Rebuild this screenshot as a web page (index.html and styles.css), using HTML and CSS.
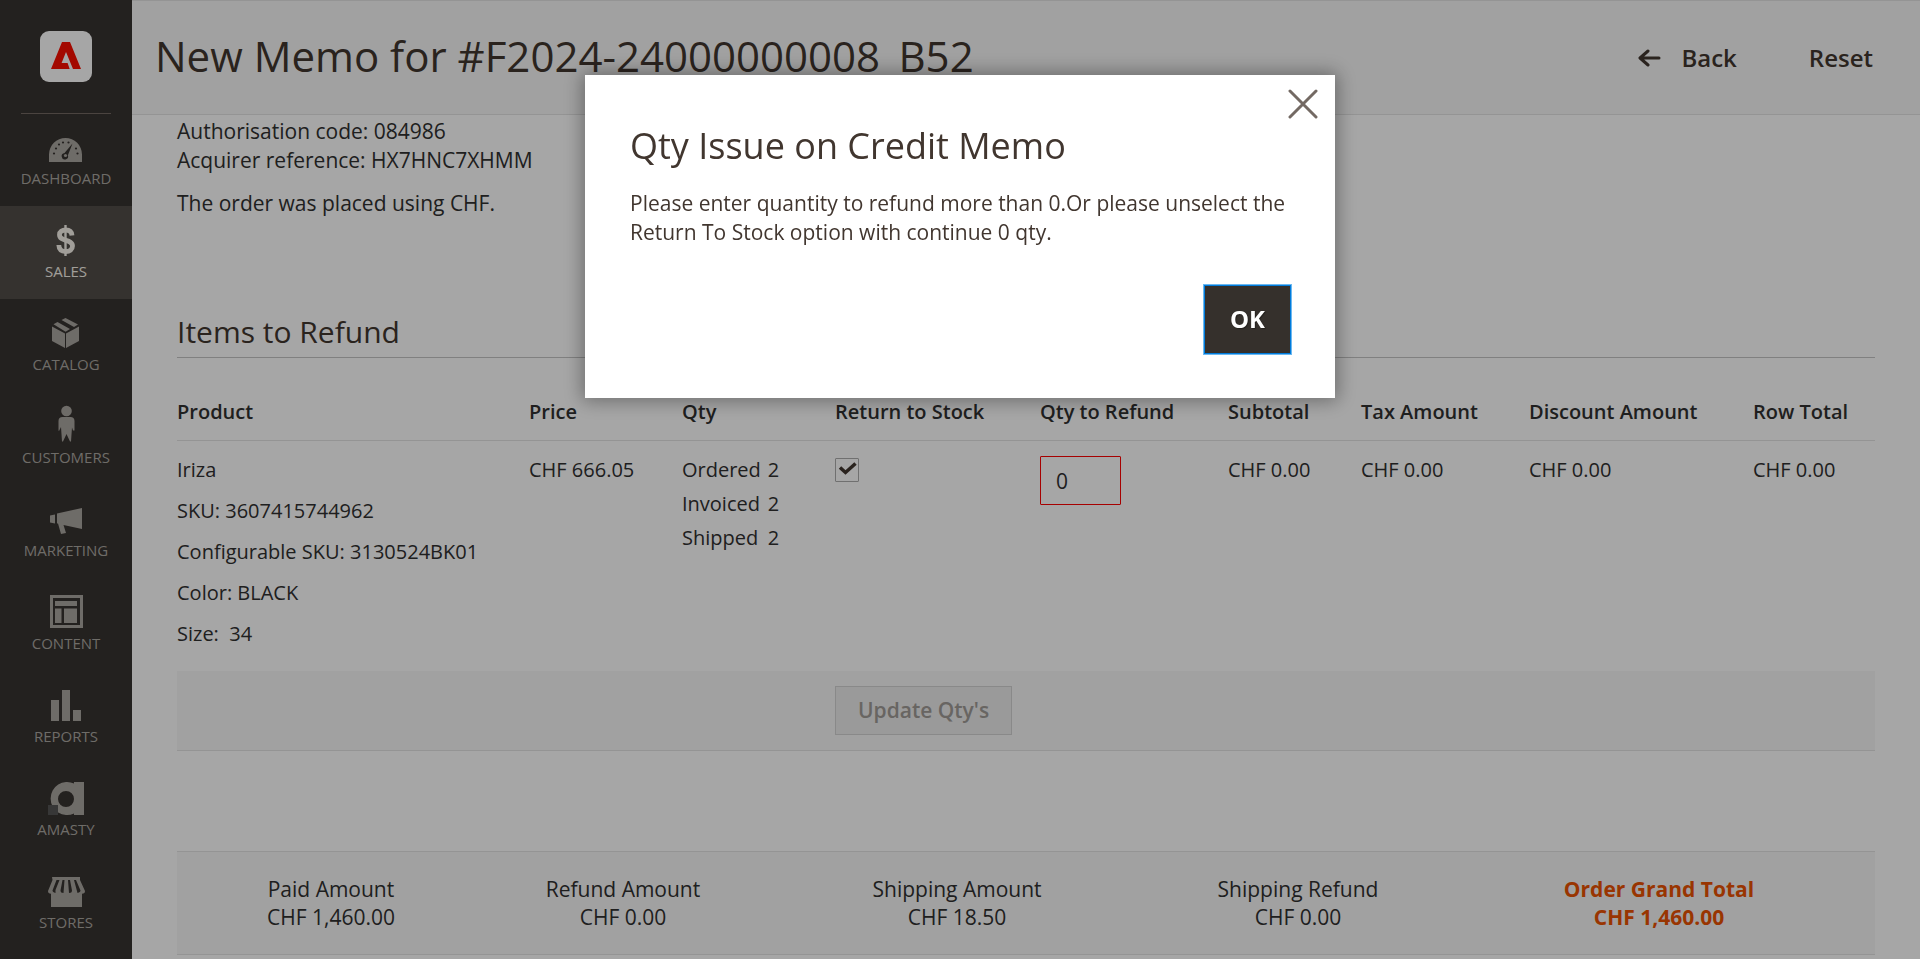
FILE: index.html
```html
<!DOCTYPE html>
<html lang="en">
<head>
<meta charset="utf-8">
<title>New Memo for #F2024-24000000008_B52</title>
<link rel="stylesheet" href="styles.css">
</head>
<body>
<div class="app">
  <aside class="sidebar">
    <a class="logo" href="#" aria-label="Admin home">
      <svg width="52" height="52" viewBox="0 0 52 52"><rect width="52" height="51" rx="9" fill="#fff"/><path d="M22 11h8l11 27h-8l-7-17-4.400 11h6l2.100 6H11z" fill="#fa0f00"/></svg>
    </a>
    <nav class="menu">
      <a class="menu-item" href="#">
        <svg class="menu-icon" viewBox="0 0 44 44"><path fill="currentColor" fill-rule="evenodd" d="M5 37V29.500a16.500 16.500 0 0 1 33 0V37zM28.500 18.500l-8 9.600a3.200 3.200 0 1 0 3.400 2.200z"/><circle cx="21.500" cy="30.500" r="1.600" fill="currentColor"/><g class="menu-hole"><circle cx="10" cy="28.500" r="1.100"/><circle cx="12" cy="23.500" r="1.100"/><circle cx="15" cy="19.500" r="1.100"/><circle cx="19" cy="17.500" r="1.100"/><circle cx="24.500" cy="17.500" r="1.100"/><circle cx="32" cy="23.500" r="1.100"/><circle cx="33.500" cy="28.500" r="1.100"/></g></svg>
        <span>Dashboard</span>
      </a>
      <a class="menu-item menu-item-active" href="#">
        <svg class="menu-icon" viewBox="0 0 44 44" fill="none" stroke="currentColor"><path stroke-width="4.800" d="M28 17.500c-.3-4-2.500-5.500-6.200-5.500-3.800 0-6.300 1.700-6.300 4.700 0 7.500 13 3.800 13 11.300 0 3.600-2.700 5.500-6.700 5.500-4.200 0-6.800-2-7-6.500"/><path stroke-width="2.400" d="M21.500 7v31"/></svg>
        <span>Sales</span>
      </a>
      <a class="menu-item" href="#">
        <svg class="menu-icon" viewBox="0 0 44 44" fill="currentColor"><path d="M8 15.500l13 7V37L8 30zM35 15.500l-13 7V37l13-7zM17.500 9L21.500 7 34 13.500l-4 2.400zM9.500 13.300l4-2.200 12.500 7-4.400 2.600z"/></svg>
        <span>Catalog</span>
      </a>
      <a class="menu-item" href="#">
        <svg class="menu-icon" viewBox="0 0 44 44" fill="currentColor"><circle cx="22.500" cy="7" r="5.300"/><path d="M18.500 13h8c2.500 0 4 1.500 4 4v9.500L29 26.500 28 23.500 27 37.500h-1L22.500 30 19 37.500h-1L17 23l-2 4-.5-.5V17c0-2.500 1.500-4 4-4z"/></svg>
        <span>Customers</span>
      </a>
      <a class="menu-item" href="#">
        <svg class="menu-icon" viewBox="0 0 44 44" fill="currentColor"><path d="M6 18.500l5-1v9l-5-1zM13 16.500L38 11v21l-18.500-4 2.500 8-5 1-3-10.500H13z"/></svg>
        <span>Marketing</span>
      </a>
      <a class="menu-item" href="#">
        <svg class="menu-icon" viewBox="0 0 44 44" fill="currentColor"><path fill-rule="evenodd" d="M6 5h33v33H6zM9 8v27h27V8z"/><path d="M11 11h22v5H11zM11 18.500h6.500V33H11zM20 18.500h13V33H20z"/></svg>
        <span>Content</span>
      </a>
      <a class="menu-item" href="#">
        <svg class="menu-icon" viewBox="0 0 44 44" fill="currentColor"><path d="M7 17h8v21H7zM18 7h8v31h-8zM29 27h8v11h-8z"/></svg>
        <span>Reports</span>
      </a>
      <a class="menu-item" href="#">
        <svg class="menu-icon" viewBox="0 0 44 44"><path fill="currentColor" fill-rule="evenodd" d="M30 6h10v33H30v-1.500a16.500 16.500 0 1 1 0-30zM22 15a8 8 0 1 0 0 16 8 8 0 1 0 0-16z"/><path fill="#555" d="M4 29h10v10H4z"/></svg>
        <span>Amasty</span>
      </a>
      <a class="menu-item" href="#">
        <svg class="menu-icon" viewBox="0 0 44 44"><path fill="currentColor" d="M8 8h28v3L41 22c0 1.800-1 2.700-3 2.700V38H7V24.700c-2 0-3-.9-3-2.700L8.500 11z"/><path class="menu-hole" d="M12.500 11h3l-4 10v3c-2-.5-3-1.300-3-2.500zM18.500 11h2l-1 13c-2 0-3-.8-3-2.500zM24 11h2l2 10.500c0 1.700-1 2.500-3 2.500zM30 11h2l4.500 10.500c0 1.200-1 2-3 2.500z"/></svg>
        <span>Stores</span>
      </a>
    </nav>
  </aside>

  <div class="page">
    <header class="page-header">
      <h1 class="page-title">New Memo for #F2024-24000000008_B52</h1>
      <div class="page-actions">
        <button class="action" type="button"><svg width="23" height="18" viewBox="0 0 23 18" fill="none" stroke="currentColor" stroke-width="3" stroke-linecap="round" stroke-linejoin="round"><path d="M10 2L2 9l8 7M2.500 9H21"/></svg>Back</button>
        <button class="action" type="button">Reset</button>
      </div>
    </header>

    <main class="content">
      <section class="payment">
        <p>Authorisation code: 084986<br>Acquirer reference: HX7HNC7XHMM</p>
        <p>The order was placed using CHF.</p>
      </section>

      <section>
        <h2 class="section-title">Items to Refund</h2>
        <table class="items">
          <colgroup><col class="col-product"><col class="col-price"><col class="col-qty"><col class="col-stock"><col class="col-refund"><col class="col-subtotal"><col class="col-tax"><col class="col-discount"><col class="col-total"></colgroup>
          <thead>
            <tr><th>Product</th><th>Price</th><th>Qty</th><th>Return to Stock</th><th>Qty to Refund</th><th>Subtotal</th><th>Tax Amount</th><th>Discount Amount</th><th>Row Total</th></tr>
          </thead>
          <tbody>
            <tr>
              <td>
                <ul class="product">
                  <li>Iriza</li>
                  <li>SKU: 3607415744962</li>
                  <li>Configurable SKU: 3130524BK01</li>
                  <li>Color: BLACK</li>
                  <li>Size:&nbsp; 34</li>
                </ul>
              </td>
              <td>CHF 666.05</td>
              <td>
                <dl class="qty"><dt>Ordered</dt><dd>2</dd><dt>Invoiced</dt><dd>2</dd><dt>Shipped</dt><dd>2</dd></dl>
              </td>
              <td>
                <label class="check"><input type="checkbox" checked aria-label="Return to Stock"><svg width="24" height="24" viewBox="0 0 24 24" fill="none" stroke="#41362f" stroke-width="3.500"><path d="M5 9.500l5.500 5L20.500 5.500"/></svg></label>
              </td>
              <td><input class="qty-input" type="text" value="0" aria-label="Qty to Refund"></td>
              <td>CHF 0.00</td><td>CHF 0.00</td><td>CHF 0.00</td><td>CHF 0.00</td>
            </tr>
          </tbody>
          <tfoot>
            <tr><td colspan="3"></td><td colspan="6"><button class="update" type="button" disabled>Update Qty's</button></td></tr>
          </tfoot>
        </table>
      </section>

      <dl class="totals">
        <div><dt>Paid Amount</dt><dd>CHF 1,460.00</dd></div>
        <div><dt>Refund Amount</dt><dd>CHF 0.00</dd></div>
        <div><dt>Shipping Amount</dt><dd>CHF 18.50</dd></div>
        <div><dt>Shipping Refund</dt><dd>CHF 0.00</dd></div>
        <div class="grand"><dt>Order Grand Total</dt><dd>CHF 1,460.00</dd></div>
      </dl>
    </main>
  </div>
</div>

<div class="overlay">
  <div class="modal" role="dialog" aria-modal="true" aria-labelledby="modal-title">
    <button class="modal-close" type="button" aria-label="Close"><svg width="30" height="30" viewBox="0 0 30 30" fill="none" stroke="currentColor" stroke-width="3" stroke-linecap="round"><path d="M2 2l26 26M28 2L2 28"/></svg></button>
    <h2 class="modal-title" id="modal-title">Qty Issue on Credit Memo</h2>
    <p class="modal-text">Please enter quantity to refund more than 0.Or please unselect the Return To Stock option with continue 0 qty.</p>
    <footer class="modal-footer"><button class="ok" type="button">OK</button></footer>
  </div>
</div>
</body>
</html>
```

FILE: styles.css
```css
* { box-sizing: border-box; }

body {
  margin: 0;
  font-family: "Open Sans", "Noto Sans", sans-serif;
  font-size: 21px;
  line-height: 29px;
  color: #303030;
  background: #fff;
}

h1, h2, p, ul, dl, dd { margin: 0; padding: 0; }
ul { list-style: none; }
a { color: inherit; text-decoration: none; }
button, input { font: inherit; color: inherit; }

.app { display: flex; min-height: 100vh; }

/* Sidebar */
.sidebar { flex: 0 0 132px; background: #373330; }
.logo {
  display: flex;
  justify-content: center;
  margin: 0 21px -1px;
  padding: 31px 0 30px;
  border-bottom: 1px solid #736963;
}
.menu-item {
  display: flex;
  flex-direction: column;
  align-items: center;
  padding: 12px 0 19px;
  font-size: 15px;
  line-height: 18px;
  text-transform: uppercase;
  color: #aaa6a0;
}
.menu-icon { width: 44px; height: 44px; }
.menu-hole { fill: #373330; }
.menu-item-active { background: #524d49; color: #f7f3eb; }

/* Page header */
.page { flex: 1; min-width: 0; }
.page-header {
  display: flex;
  align-items: center;
  justify-content: space-between;
  height: 115px;
  padding: 0 47px 0 23px;
  background: #f8f8f8;
  border: solid #e3e3e3;
  border-width: 1px 0;
  color: #41362f;
}
.page-title {
  padding-bottom: 3px;
  font-size: 42px;
  font-weight: 400;
  line-height: 54px;
}
.page-actions { display: flex; gap: 72px; }
.action {
  display: flex;
  align-items: center;
  gap: 20px;
  padding: 0;
  border: 0;
  background: none;
  font-size: 24px;
  font-weight: 600;
}

/* Content */
.content { padding: 2px 45px 4px; }
.payment { display: grid; gap: 14px; padding: 0 0 94px; }
.section-title {
  padding-bottom: 5px;
  border-bottom: 1px solid #c5c5c5;
  font-size: 30px;
  font-weight: 400;
  line-height: 40px;
  color: #41362f;
}

.items {
  width: 100%;
  margin-top: 40px;
  border-collapse: collapse;
  table-layout: fixed;
  font-size: 20px;
  line-height: 27px;
}
.col-product { width: 352px; }
.col-price, .col-qty { width: 153px; }
.col-stock { width: 205px; }
.col-refund { width: 188px; }
.col-subtotal { width: 133px; }
.col-tax { width: 168px; }
.col-discount { width: 224px; }
.col-total { width: 122px; }
.items th {
  padding: 0 0 15px;
  border-bottom: 1px solid #e3e3e3;
  font-weight: 600;
  text-align: left;
}
.items td { padding: 15px 0 24px; vertical-align: top; }
.items tfoot td {
  padding: 15px 0;
  background: #f8f8f8;
  border-bottom: 1px solid #e3e3e3;
}
.product { display: grid; gap: 14px; }
.qty {
  display: grid;
  grid-template-columns: auto auto;
  justify-content: start;
  gap: 7px;
}

.check { display: grid; width: 24px; margin-top: 2px; }
.check input {
  grid-area: 1 / 1;
  appearance: none;
  width: 24px;
  height: 24px;
  margin: 0;
  border: 1px solid #adadad;
  border-radius: 1px;
  background: #fff;
}
.check svg { grid-area: 1 / 1; pointer-events: none; }
.qty-input {
  display: block;
  width: 81px;
  height: 49px;
  padding: 0 15px;
  border: 1px solid #f00;
  border-radius: 1px;
  background: #fff;
  font-size: 21px;
}
.update {
  display: block;
  height: 49px;
  padding: 0 22px;
  border: 1px solid #d3d3d3;
  background: #ededed;
  font-size: 21px;
  font-weight: 600;
  color: #a09b97;
}

.totals {
  display: grid;
  grid-template-columns: 308fr 276fr 392fr 290fr 432fr;
  margin-top: 100px;
  padding: 23px 0;
  background: #f8f8f8;
  border: solid #e3e3e3;
  border-width: 1px 0;
  line-height: 28px;
  text-align: center;
}
.grand { font-weight: 700; color: #eb5202; }

/* Modal */
.overlay {
  position: fixed;
  inset: 0;
  padding-top: 75px;
  background: rgba(0, 0, 0, .35);
}
.modal {
  position: relative;
  width: 750px;
  margin: 0 auto;
  padding: 47px 43px 43px 45px;
  background: #fff;
  box-shadow: 0 0 18px 3px rgba(0, 0, 0, .35);
  color: #41362f;
}
.modal-close {
  position: absolute;
  top: 14px;
  right: 17px;
  display: flex;
  padding: 0;
  border: 0;
  background: none;
  color: #736963;
}
.modal-title { font-size: 36px; font-weight: 400; line-height: 48px; }
.modal-text { margin-top: 19px; }
.modal-footer { display: flex; justify-content: flex-end; margin-top: 37px; }
.ok {
  width: 89px;
  height: 71px;
  padding: 0 0 2px;
  border: 2px solid #007bdb;
  outline: 1px solid #6cb8f0;
  outline-offset: -1px;
  background: #35302c;
  font-size: 24px;
  font-weight: 700;
  color: #fff;
  text-shadow: 1px 1px 1px rgba(0, 0, 0, .3);
}
```
